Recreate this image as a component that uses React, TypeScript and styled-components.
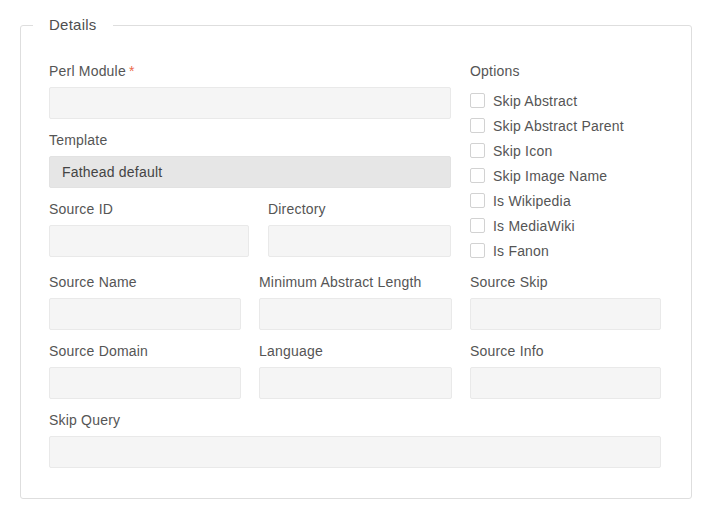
import React from "react";
import styled, { createGlobalStyle } from "styled-components";

const Global = createGlobalStyle`
  html, body { margin: 0; padding: 0; background: #fff; }
  body { font-family: "Liberation Sans", Arial, sans-serif; }
  * { box-sizing: border-box; }
`;

const Page = styled.div`
  padding: 15px 18px 0 20px;
  width: 710px;
`;

const Fieldset = styled.fieldset`
  margin: 0;
  width: 672px;
  border: 1px solid #dedede;
  border-radius: 3px;
  padding: 26px 30px 19px 28px;
`;

const Legend = styled.legend`
  margin-left: -16px;
  padding: 0 16px;
  font-size: 15px;
  line-height: 20px;
  letter-spacing: 0.25px;
  color: #4f4f4f;
`;

const TopSection = styled.div`
  display: grid;
  grid-template-columns: 402px 1fr;
  column-gap: 19px;
`;

const Column = styled.div`
  display: flex;
  flex-direction: column;
`;

const Row = styled.div<{ $cols: string; $gap: number }>`
  display: grid;
  grid-template-columns: ${(p) => p.$cols};
  column-gap: ${(p) => p.$gap}px;
`;

const Field = styled.div`
  display: flex;
  flex-direction: column;
  margin-bottom: 11px;
`;

const Label = styled.label`
  display: block;
  font-size: 14px;
  line-height: 20px;
  letter-spacing: 0.2px;
  color: #555;
  margin-bottom: 6px;
`;

const Required = styled.span`
  color: #ec6a4a;
  margin-left: 3px;
`;

const Input = styled.div<{ $disabled?: boolean }>`
  height: 32px;
  border: 1px solid ${(p) => (p.$disabled ? "#e2e2e2" : "#e9e9e9")};
  border-radius: 2px;
  background: ${(p) => (p.$disabled ? "#e6e6e6" : "#f5f5f5")};
  padding: 0 12px;
  display: flex;
  align-items: center;
  font-size: 14px;
  letter-spacing: 0.2px;
  color: #444;
`;

const OptionsLabel = styled(Label)`
  margin-bottom: 7px;
`;

const CheckList = styled.div`
  display: flex;
  flex-direction: column;
  padding-bottom: 9px;
`;

const CheckRow = styled.label`
  height: 25px;
  display: flex;
  align-items: center;
  gap: 8px;
  font-size: 14px;
  letter-spacing: 0.2px;
  color: #555;
`;

const Box = styled.span`
  width: 15px;
  height: 15px;
  border: 1px solid #d2d2d2;
  border-radius: 2px;
  background: #fff;
  flex: none;
`;

const options = [
  "Skip Abstract",
  "Skip Abstract Parent",
  "Skip Icon",
  "Skip Image Name",
  "Is Wikipedia",
  "Is MediaWiki",
  "Is Fanon",
];

const TextField = ({ label, required, value, disabled }: { label: string; required?: boolean; value?: string; disabled?: boolean }) => (
  <Field>
    <Label>
      {label}
      {required && <Required>*</Required>}
    </Label>
    <Input $disabled={disabled}>{value}</Input>
  </Field>
);

export default function App() {
  return (
    <Page>
      <Global />
      <Fieldset>
        <Legend>Details</Legend>
        <TopSection>
          <Column>
            <TextField label="Perl Module" required />
            <TextField label="Template" value="Fathead default" disabled />
            <Row $cols="200px 1fr" $gap={19}>
              <TextField label="Source ID" />
              <TextField label="Directory" />
            </Row>
          </Column>
          <Column>
            <OptionsLabel>Options</OptionsLabel>
            <CheckList>
              {options.map((o) => (
                <CheckRow key={o}>
                  <Box />
                  {o}
                </CheckRow>
              ))}
            </CheckList>
          </Column>
        </TopSection>
        <Row $cols="192px 193px 1fr" $gap={18}>
          <TextField label="Source Name" />
          <TextField label="Minimum Abstract Length" />
          <TextField label="Source Skip" />
          <TextField label="Source Domain" />
          <TextField label="Language" />
          <TextField label="Source Info" />
        </Row>
        <TextField label="Skip Query" />
      </Fieldset>
    </Page>
  );
}
